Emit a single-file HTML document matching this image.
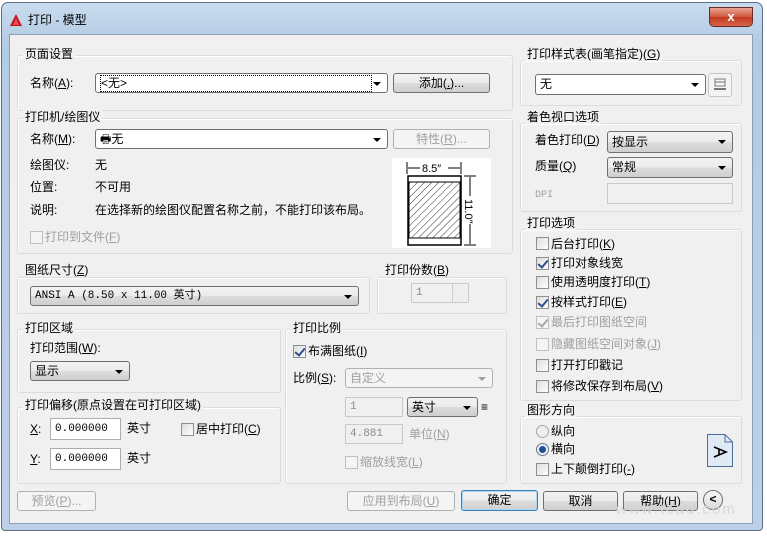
<!DOCTYPE html>
<html><head><meta charset="utf-8"><style>
*{box-sizing:border-box;margin:0;padding:0}
body{width:767px;height:539px;background:#fff;position:relative;overflow:hidden;font-family:"Liberation Sans","Noto Sans CJK SC",sans-serif;font-size:12px;color:#000}
.a{position:absolute;white-space:nowrap;line-height:14px}
.win{position:absolute;left:1px;top:2px;width:762px;height:529px;border:1px solid #5a6f86;border-radius:7px 7px 4px 4px;background:linear-gradient(#c9dcef,#b4cbe4 40px,#bcd1e8)}
.client{position:absolute;left:9px;top:34px;width:744px;height:490px;background:#f0f0f0;border:1px solid #8ba0b8}
.g{position:absolute;border:1px solid #d9dde0;border-radius:3px;box-shadow:inset 1px 1px 0 #fff}
.gl{position:absolute;background:#f0f0f0;padding:0 2px;line-height:14px;white-space:nowrap}
.dd{position:absolute;border:1px solid #707070;border-radius:3px;background:linear-gradient(#f2f2f2,#ebebeb 50%,#dddddd 51%,#cfcfcf);padding-left:4px;line-height:18px;white-space:nowrap}
.dd:after{content:"";position:absolute;right:6px;top:8px;border:4px solid transparent;border-top:4px solid #000;border-bottom:0}
.dd.w{background:#fff}
.dd.dis{border-color:#adb2b5;background:#f4f4f4;color:#a0a0a0}
.dd.dis:after{border-top-color:#a0a0a0}
.in{position:absolute;background:#fff;border:1px solid #abadb3;padding-left:4px;line-height:18px;font-family:"Liberation Mono","Noto Sans CJK SC",monospace;font-size:11px}
.in.dis{background:#f0f0f0;border-color:#c9c9c9;color:#8a8a8a}
.bt{position:absolute;border:1px solid #707070;border-radius:3px;background:linear-gradient(#f2f2f2,#ebebeb 50%,#dddddd 51%,#cfcfcf);text-align:center;line-height:18px}
.bt.dis{border-color:#adb2b5;background:#f4f4f4;color:#a0a0a0}
.cb{position:absolute;width:13px;height:13px;border:1px solid #8e8f8f;background:linear-gradient(135deg,#dcdcdc,#fff)}
.cb.dis{border-color:#c0c0c0;background:#f4f4f4}
.ck:after{content:"";position:absolute;left:3px;top:0px;width:4px;height:8px;border:solid #2a4f8a;border-width:0 2px 2px 0;transform:rotate(40deg)}
.ck.dis:after{border-color:#a8a8a8}
.gr{color:#a0a0a0}
</style></head><body>
<div class="win"></div>
<svg class="a" style="left:9px;top:13px" width="14" height="14"><polygon points="7,1 13,13 1,13" fill="#c8141c"/><polygon points="7,5 10,12 4,12" fill="#e85050"/></svg>
<div class="a" style="left:28px;top:13px;font-size:12px">打印 - 模型</div>
<div class="a" style="left:709px;top:7px;width:44px;height:20px;border:1px solid #6b2a22;border-radius:0 0 5px 5px;background:linear-gradient(#e8a493,#d2553d 50%,#c23a1e 51%,#d4654c);color:#fff;text-align:center;font-weight:bold;font-size:13px;line-height:18px">x</div>
<div class="client"></div>

<!-- 页面设置 -->
<div class="g" style="left:17px;top:55px;width:496px;height:56px"></div>
<div class="gl" style="left:23px;top:47px">页面设置</div>
<div class="a" style="left:30px;top:76px">名称(<u>A</u>):</div>
<div class="dd w" style="left:95px;top:73px;width:293px;height:20px"><span style="border:1px dotted #000;display:inline-block;width:272px;line-height:15px;margin-top:1px">&lt;无&gt;</span></div>
<div class="bt" style="left:393px;top:73px;width:97px;height:20px">添加(<u>.</u>)...</div>

<!-- 打印机 -->
<div class="g" style="left:17px;top:118px;width:496px;height:136px"></div>
<div class="gl" style="left:23px;top:110px">打印机/绘图仪</div>
<div class="a" style="left:30px;top:132px">名称(<u>M</u>):</div>
<div class="dd w" style="left:95px;top:129px;width:293px;height:20px">&#x1F5B6;无</div>
<div class="bt dis" style="left:393px;top:129px;width:97px;height:20px">特性(<u>R</u>)...</div>
<div class="a" style="left:30px;top:158px">绘图仪:</div><div class="a" style="left:95px;top:158px">无</div>
<div class="a" style="left:30px;top:180px">位置:</div><div class="a" style="left:95px;top:180px">不可用</div>
<div class="a" style="left:30px;top:203px">说明:</div><div class="a" style="left:95px;top:203px">在选择新的绘图仪配置名称之前，不能打印该布局。</div>
<div class="cb dis" style="left:30px;top:231px"></div><div class="a gr" style="left:45px;top:230px">打印到文件(<u>F</u>)</div>
<svg class="a" style="left:392px;top:158px" width="99" height="90">
<rect width="99" height="90" fill="#fff"/>
<defs><pattern id="h" width="5" height="5" patternUnits="userSpaceOnUse" patternTransform="rotate(45)"><line x1="0" y1="0" x2="0" y2="5" stroke="#000" stroke-width="0.8"/></pattern></defs>
<rect x="16" y="18" width="53" height="69" fill="none" stroke="#000" stroke-width="1.5"/>
<rect x="17" y="24" width="51" height="56" fill="url(#h)" stroke="#000"/>
<line x1="15" y1="4" x2="15" y2="16" stroke="#000"/><line x1="69" y1="4" x2="69" y2="16" stroke="#000"/>
<line x1="16" y1="10" x2="28" y2="10" stroke="#000"/><line x1="56" y1="10" x2="68" y2="10" stroke="#000"/>
<text x="30" y="14" font-size="11" font-family="Liberation Sans">8.5″</text>
<line x1="72" y1="18" x2="84" y2="18" stroke="#000"/><line x1="72" y1="87" x2="84" y2="87" stroke="#000"/>
<line x1="78" y1="19" x2="78" y2="38" stroke="#000"/><line x1="78" y1="66" x2="78" y2="86" stroke="#000"/>
<text x="73" y="41" font-size="11" font-family="Liberation Sans" transform="rotate(90 73 41)">11.0″</text>
</svg>

<!-- 图纸尺寸 -->
<div class="g" style="left:17px;top:277px;width:353px;height:37px"></div>
<div class="gl" style="left:23px;top:263px">图纸尺寸(<u>Z</u>)</div>
<div class="dd" style="left:30px;top:286px;width:329px;height:20px;font-family:'Liberation Mono','Noto Sans CJK SC',monospace;font-size:11px">ANSI A (8.50 x 11.00 英寸)</div>
<div class="g" style="left:377px;top:277px;width:130px;height:37px"></div>
<div class="gl" style="left:383px;top:263px">打印份数(<u>B</u>)</div>
<div class="in dis" style="left:411px;top:283px;width:58px;height:20px">1</div>
<div class="a" style="left:452px;top:284px;width:16px;height:18px;border-left:1px solid #ccc;background:#eee"></div>

<!-- 打印区域 -->
<div class="g" style="left:17px;top:329px;width:264px;height:64px"></div>
<div class="gl" style="left:23px;top:321px">打印区域</div>
<div class="a" style="left:30px;top:341px">打印范围(<u>W</u>):</div>
<div class="dd" style="left:30px;top:361px;width:100px;height:20px">显示</div>

<!-- 打印偏移 -->
<div class="g" style="left:17px;top:407px;width:264px;height:77px"></div>
<div class="gl" style="left:23px;top:398px">打印偏移(原点设置在可打印区域)</div>
<div class="a" style="left:30px;top:422px"><u>X</u>:</div>
<div class="in" style="left:50px;top:418px;width:71px;height:22px;line-height:20px">0.000000</div>
<div class="a" style="left:127px;top:421px">英寸</div>
<div class="cb" style="left:181px;top:423px"></div><div class="a" style="left:196px;top:422px">居中打印(<u>C</u>)</div>
<div class="a" style="left:30px;top:452px"><u>Y</u>:</div>
<div class="in" style="left:50px;top:448px;width:71px;height:22px;line-height:20px">0.000000</div>
<div class="a" style="left:127px;top:451px">英寸</div>

<!-- 打印比例 -->
<div class="g" style="left:285px;top:329px;width:222px;height:155px"></div>
<div class="gl" style="left:291px;top:321px">打印比例</div>
<div class="cb ck" style="left:293px;top:345px"></div><div class="a" style="left:308px;top:344px">布满图纸(<u>I</u>)</div>
<div class="a" style="left:293px;top:371px">比例(<u>S</u>):</div>
<div class="dd dis" style="left:345px;top:368px;width:148px;height:20px">自定义</div>
<div class="in dis" style="left:345px;top:397px;width:58px;height:20px">1</div>
<div class="dd" style="left:407px;top:397px;width:71px;height:20px">英寸</div>
<div class="a" style="left:481px;top:400px">≡</div>
<div class="in dis" style="left:345px;top:424px;width:58px;height:20px">4.881</div>
<div class="a gr" style="left:409px;top:427px">单位(<u>N</u>)</div>
<div class="cb dis" style="left:345px;top:456px"></div><div class="a gr" style="left:360px;top:455px">缩放线宽(<u>L</u>)</div>

<!-- right column -->
<div class="g" style="left:520px;top:60px;width:222px;height:46px"></div>
<div class="gl" style="left:525px;top:47px">打印样式表(画笔指定)(<u>G</u>)</div>
<div class="dd w" style="left:535px;top:74px;width:171px;height:21px">无</div>
<div class="a" style="left:708px;top:73px;width:24px;height:24px;border:1px solid #c5c5c5;border-radius:3px;background:#f4f4f4"></div>
<svg class="a" style="left:712px;top:77px" width="16" height="16"><rect x="3" y="2" width="10" height="7" fill="none" stroke="#777"/><line x1="3" y1="5" x2="13" y2="5" stroke="#777"/><rect x="2" y="11" width="12" height="2" fill="#777"/></svg>

<div class="g" style="left:520px;top:123px;width:222px;height:89px"></div>
<div class="gl" style="left:525px;top:110px">着色视口选项</div>
<div class="a" style="left:535px;top:133px">着色打印(<u>D</u>)</div>
<div class="dd" style="left:607px;top:131px;width:126px;height:22px;line-height:20px">按显示</div>
<div class="a" style="left:535px;top:159px">质量(<u>Q</u>)</div>
<div class="dd" style="left:607px;top:157px;width:126px;height:21px">常规</div>
<div class="a gr" style="left:535px;top:189px;font-size:10px;font-family:'Liberation Mono',monospace">DPI</div>
<div class="in dis" style="left:607px;top:183px;width:126px;height:21px"></div>

<div class="g" style="left:520px;top:229px;width:222px;height:172px"></div>
<div class="gl" style="left:525px;top:216px">打印选项</div>
<div class="cb" style="left:536px;top:237px"></div><div class="a" style="left:551px;top:237px">后台打印(<u>K</u>)</div>
<div class="cb ck" style="left:536px;top:257px"></div><div class="a" style="left:551px;top:256px">打印对象线宽</div>
<div class="cb" style="left:536px;top:276px"></div><div class="a" style="left:551px;top:275px">使用透明度打印(<u>T</u>)</div>
<div class="cb ck" style="left:536px;top:296px"></div><div class="a" style="left:551px;top:295px">按样式打印(<u>E</u>)</div>
<div class="cb ck dis" style="left:536px;top:316px"></div><div class="a gr" style="left:551px;top:315px">最后打印图纸空间</div>
<div class="cb dis" style="left:536px;top:338px"></div><div class="a gr" style="left:551px;top:337px">隐藏图纸空间对象(<u>J</u>)</div>
<div class="cb" style="left:536px;top:359px"></div><div class="a" style="left:551px;top:358px">打开打印戳记</div>
<div class="cb" style="left:536px;top:380px"></div><div class="a" style="left:551px;top:379px">将修改保存到布局(<u>V</u>)</div>

<div class="g" style="left:520px;top:416px;width:222px;height:68px"></div>
<div class="gl" style="left:525px;top:403px">图形方向</div>
<div class="a" style="left:536px;top:425px;width:13px;height:13px;border:1px solid #a8a8a8;border-radius:50%;background:#eee"></div><div class="a" style="left:551px;top:424px">纵向</div>
<div class="a" style="left:536px;top:443px;width:13px;height:13px;border:1px solid #6a7a8a;border-radius:50%;background:#eee"><div style="margin:2px;width:7px;height:7px;border-radius:50%;background:#1d4f9a"></div></div><div class="a" style="left:551px;top:442px">横向</div>
<div class="cb" style="left:536px;top:463px"></div><div class="a" style="left:551px;top:462px">上下颠倒打印(<u>-</u>)</div>
<svg class="a" style="left:707px;top:434px" width="26" height="33"><path d="M0.5,0.5 H18 L25.5,8 V32.5 H0.5 Z" fill="#dfeaf5" stroke="#4a6f96"/><path d="M18,0.5 V8 H25.5" fill="none" stroke="#4a6f96"/><path d="M7,13 L19,18 L7,23 M12,15 V21" fill="none" stroke="#000" stroke-width="1.6"/></svg>

<!-- bottom buttons -->
<div class="bt dis" style="left:17px;top:491px;width:79px;height:20px">预览(<u>P</u>)...</div>
<div class="bt dis" style="left:347px;top:491px;width:108px;height:20px">应用到布局(<u>U</u>)</div>
<div class="bt" style="left:461px;top:490px;width:77px;height:21px;border-color:#3c7fb1;box-shadow:inset 0 0 0 1px #a8d8f5">确定</div>
<div class="bt" style="left:543px;top:491px;width:75px;height:20px">取消</div>
<div class="bt" style="left:623px;top:491px;width:75px;height:20px">帮助(<u>H</u>)</div>
<div class="a" style="left:703px;top:490px;width:20px;height:20px;border:1px solid #707070;border-radius:50%;background:linear-gradient(#fafafa,#d8d8d8);text-align:center;font-weight:bold;line-height:17px">&lt;</div>
<div class="a" style="left:616px;top:503px;color:#d8d8d8;font-size:15px;letter-spacing:2px">www.tcad.com</div>
</body></html>
